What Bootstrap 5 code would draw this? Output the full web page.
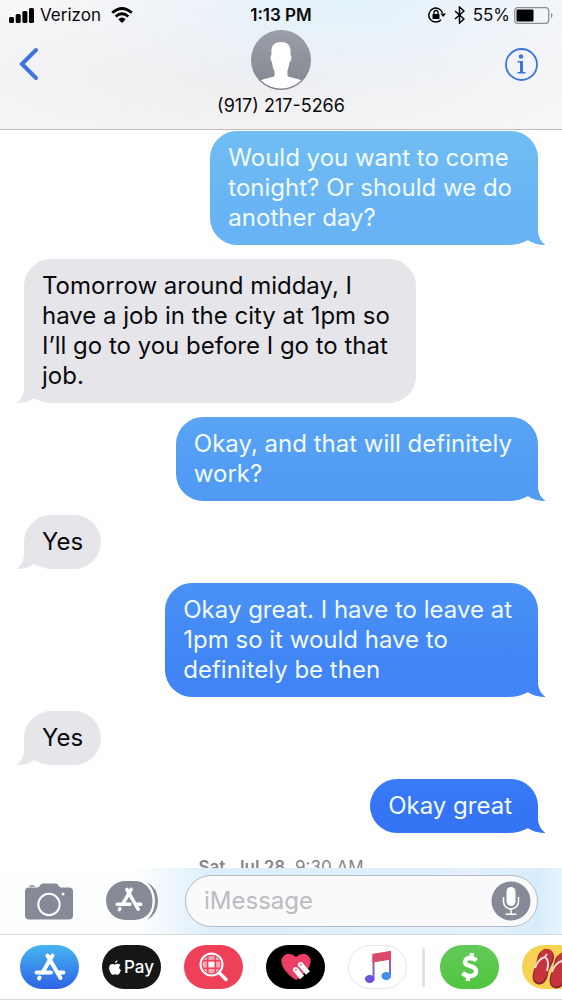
<!DOCTYPE html>
<html lang="en">
<head>
<meta charset="utf-8">
<meta name="viewport" content="width=device-width, initial-scale=1">
<title>Messages</title>
<link href="https://cdn.jsdelivr.net/npm/bootstrap@5.3.0/dist/css/bootstrap.min.css" rel="stylesheet">
<style>
  body { font-family: Inter, "Liberation Sans", sans-serif; color: #0a0a0c; background: #fff; }
  svg { display: block; flex: none; }
  .plain-btn { background: none; border: 0; padding: 0; }
  .three-part { display: grid; grid-template-columns: 1fr auto 1fr; align-items: center; }

  .top-bar {
    height: 130px;
    border-bottom: 1px solid #bebec1;
    background:
      radial-gradient(ellipse at 62% 0, #e2f1fb 0, rgba(226,241,251,0) 55%),
      radial-gradient(ellipse at 42% 60%, #eeeef0 0, #f6f6f8 80%);
  }
  .status { height: 30px; padding: 0 9px; font-size: 17px; line-height: 30px; }
  .carrier { margin: 0 10px 0 6px; }
  .contact-bar { height: 60px; padding: 0 18px; }
  .contact-bar .plain-btn { margin-top: 8px; }
  .details { padding-right: 6px; }
  .contact-name { font-size: 18px; line-height: 32px; font-weight: 400; }

  .thread { min-height: 0; gap: 14px; padding: 1px 24px 0; }
  .bubble { position: relative; flex: none; padding: 12px 26px 12px 18px; border-radius: 27px; font-size: 24px; line-height: 30px; }
  .bubble.short { padding-right: 18px; }
  .bubble .tail { position: absolute; bottom: 0; }
  .sent { color: #f1fbff; border-bottom-right-radius: 0; }
  .sent .tail { right: -8px; }
  .received { background: #e5e5ea; fill: #e5e5ea; border-bottom-left-radius: 0; }
  .received .tail { left: -8px; transform: scaleX(-1); }
  .notch { fill: #fff; }
  .tone-1 { background: linear-gradient(#70bdf3, #68b3f4 calc(100% - 28px)); fill: #68b3f4; }
  .tone-2 { background: linear-gradient(#5ba5f4, #519bf5 calc(100% - 28px)); fill: #519bf5; }
  .tone-3 { background: linear-gradient(#4a92f5, #4084f5 calc(100% - 28px)); fill: #4084f5; }
  .tone-4 { background: linear-gradient(#3a7cf6, #3575f5 calc(100% - 28px)); fill: #3575f5; }
  .day { color: #85858a; font-size: 17px; line-height: 20px; margin-top: 10px; flex: none; }

  .compose {
    height: 67px;
    padding: 0 24px;
    border-bottom: 1px solid #d9dadd;
    background: linear-gradient(90deg, #fdfefe 24%, #dceefb 38%, #e2f1fc 85%, #d8edfc 96%, #e6f4fd);
  }
  .message-box { height: 52px; min-width: 0; border: 1px solid #b9bac0; border-radius: 26px; background: #fafafa; padding: 0 6px 0 18px; margin-left: 27px; }
  .message-box input { border: 0; outline: 0; background: none; font-size: 24px; min-width: 0; padding: 0; }
  .message-box input::placeholder { color: #bcbcc2; opacity: 1; }
  .app-strip { height: 65px; gap: 23px; padding-left: 20px; border-bottom: 1px solid #d9dadd; }
  .app { width: 59px; height: 44px; border-radius: 22px; flex: none; overflow: hidden; display: flex; align-items: center; justify-content: center; }
  .app-store { background: linear-gradient(#45b5f0, #2d63e6); }
  .app-pay { background: #161616; color: #fff; font-size: 17px; line-height: 24px; font-weight: 500; gap: 3px; }
  .app-search { background: #ee4159; }
  .app-touch { background: #000; }
  .app-music { background: #fff; border: 1px solid #e6e6e8; }
  .app-cash { background: linear-gradient(#63ca5a, #4fc63f); }
  .app-emoji { background: #f7d354; }
  .divider { width: 3px; height: 39px; margin: 0 -8px; background: #e2e2e6; border-radius: 2px; flex: none; }
</style>
</head>
<body class="vh-100 d-flex flex-column overflow-hidden">

<svg width="0" height="0" class="position-absolute" aria-hidden="true">
  <symbol id="tail" viewBox="0 0 40 28">
    <path class="notch" d="M2 28Q14 28 22 23Q30 28 40 28V29H2Z"/>
    <path d="M32 0V14Q32.500 23 39.500 28Q29 28 22 23L20 0Z"/>
    <path class="notch" d="M32.300 14Q33 23 40 28V14Z"/>
  </symbol>
  <symbol id="store" viewBox="0 0 32 30">
    <g fill="none" stroke="currentColor" stroke-width="4" stroke-linecap="round">
      <path d="M13.500 3.500L26.500 26M18.500 3.500L8.500 20.500M5.500 25.500L5 26.500" />
      <path d="M2.500 20.500H17M24.500 20.500H29.500"/>
    </g>
  </symbol>
</svg>

<header class="top-bar flex-shrink-0">
  <div class="status three-part">
    <div class="d-flex align-items-center">
      <svg width="25" height="15" viewBox="0 0 25 15" aria-label="Signal"><rect y="9" width="5" height="6" rx="1.500"/><rect x="6.700" y="6" width="5" height="9" rx="1.500"/><rect x="13.400" y="3" width="5" height="12" rx="1.500"/><rect x="20" width="5" height="15" rx="1.500"/></svg>
      <span class="carrier">Verizon</span>
      <svg width="22" height="16" viewBox="0 0 22 16" aria-label="Wi-Fi"><g fill="none" stroke="#000" stroke-width="2.800"><path d="M1.200 5.800Q11 -2.800 20.800 5.800"/><path d="M4.700 9.500Q11 4 17.300 9.500"/></g><path d="M7.300 12.200Q11 9 14.700 12.200L11 16Z"/></svg>
    </div>
    <time class="fw-semibold">1:13 PM</time>
    <div class="d-flex align-items-center justify-content-end">
      <svg width="18" height="16" viewBox="0 0 18 16" aria-label="Rotation lock"><path d="M14.500 6A7 7 0 1 0 13 12.800" fill="none" stroke="#000" stroke-width="1.500"/><path d="M12.300 6.500H18L15.200 10Z"/><rect x="4.500" y="7" width="7" height="5" rx=".6"/><path d="M6 7V5.500a2 2 0 0 1 4 0V7" fill="none" stroke="#000" stroke-width="1.300"/></svg>
      <svg class="mx-2" width="11" height="18" viewBox="0 0 11 18" aria-label="Bluetooth"><path d="M1 5L10 13L5.500 17V1L10 5L1 13" fill="none" stroke="#000" stroke-width="1.500"/></svg>
      <span class="me-1">55%</span>
      <svg width="39" height="17" viewBox="0 0 39 17" aria-label="Battery"><rect x=".7" y=".7" width="34" height="15.600" rx="3" fill="none" stroke="#8d9196" stroke-width="1.300"/><rect x="2.500" y="2.500" width="17" height="12" rx="1"/><path d="M37 5.500Q40 8.500 37 11.500Z" fill="#8d9196"/></svg>
    </div>
  </div>
  <div class="contact-bar three-part">
    <div class="d-flex"><button class="plain-btn" type="button" aria-label="Back"><svg width="21" height="34" viewBox="0 0 21 34"><path d="M18 3L4 17L18 31" fill="none" stroke="#3d74dd" stroke-width="4" stroke-linecap="round"/></svg></button></div>
    <svg width="60" height="60" viewBox="0 0 60 60" aria-label="Contact photo"><defs><linearGradient id="av" x2="0" y2="1"><stop stop-color="#9b9fa9"/><stop offset="1" stop-color="#84868f"/></linearGradient><clipPath id="avc"><circle cx="30" cy="30" r="28.500"/></clipPath></defs><circle cx="30" cy="30" r="30" fill="url(#av)"/><path clip-path="url(#avc)" fill="#fff" d="M30 12C37 12 40.500 16 39.500 25C41 26 40.500 31 38.500 32C38 36 37 39 36.500 41V46C39 48 49 48 54 53L42 60H18L6 53C11 48 21 48 23.500 46V41C22 39 21.500 36 21 32C19.500 31 19 26 20.500 25C19.500 16 23 12 30 12Z"/></svg>
    <div class="details d-flex justify-content-end"><button class="plain-btn" type="button" aria-label="Details"><svg width="33" height="34" viewBox="0 0 33 34"><circle cx="16.500" cy="17.500" r="15.500" fill="none" stroke="#3d74dd" stroke-width="1.800"/><circle cx="16" cy="9.500" r="2.200" fill="#3d74dd"/><path d="M12.500 14H18V25H20.500V26.500H12.500V25H15V15.500H12.500Z" fill="#3d74dd"/></svg></button></div>
  </div>
  <h1 class="contact-name text-center m-0">(917) 217-5266</h1>
</header>

<main class="thread flex-grow-1 d-flex flex-column overflow-hidden">
  <div class="bubble sent tone-1 align-self-end">Would you want to come<br>tonight? Or should we do<br>another day?<svg class="tail" width="40" height="28"><use href="#tail"/></svg></div>
  <div class="bubble received align-self-start">Tomorrow around midday, I<br>have a job in the city at 1pm so<br>I’ll go to you before I go to that<br>job.<svg class="tail" width="40" height="28"><use href="#tail"/></svg></div>
  <div class="bubble sent tone-2 align-self-end">Okay, and that will definitely<br>work?<svg class="tail" width="40" height="28"><use href="#tail"/></svg></div>
  <div class="bubble received short align-self-start">Yes<svg class="tail" width="40" height="28"><use href="#tail"/></svg></div>
  <div class="bubble sent tone-3 align-self-end">Okay great. I have to leave at<br>1pm so it would have to<br>definitely be then<svg class="tail" width="40" height="28"><use href="#tail"/></svg></div>
  <div class="bubble received short align-self-start">Yes<svg class="tail" width="40" height="28"><use href="#tail"/></svg></div>
  <div class="bubble sent tone-4 align-self-end">Okay great<svg class="tail" width="40" height="28"><use href="#tail"/></svg></div>
  <div class="day text-center"><span class="fw-semibold">Sat, Jul 28,</span> 9:30 AM</div>
</main>

<footer class="flex-shrink-0">
  <form class="compose d-flex align-items-center">
    <button class="plain-btn" type="button" aria-label="Camera"><svg width="50" height="37" viewBox="0 0 50 37"><path fill="#858a96" d="M5 4.500Q1 4.500 1 8.500V32.500Q1 36.500 5 36.500H45Q49 36.500 49 32.500V8.500Q49 4.500 45 4.500H37Q35.500 4.500 34.500 2.500Q33.500 .5 31.500 .5H19Q17 .5 16 2.500Q15 4.500 13.500 4.500Z"/><path d="M5.500 3H10.500" stroke="#858a96" stroke-width="1.500"/><circle cx="25" cy="21.500" r="10.700" fill="none" stroke="#fff" stroke-width="2"/><circle cx="39" cy="11" r="1.500" fill="#fff"/></svg></button>
    <button class="plain-btn ms-4 ps-2" type="button" aria-label="Apps"><svg width="52" height="40" viewBox="0 0 52 40" color="#fff"><path fill="#858a96" d="M41 1Q52 7 52 20T41 39Q49 31 49 20T41 1Z"/><rect y="0" width="48" height="39" rx="19.500" fill="#858a96"/><path d="M37 1Q47.500 7 47.500 20T37 39" fill="none" stroke="#fff" stroke-width="1.800"/><use href="#store" x="9" y="5" width="28" height="27"/></svg></button>
    <div class="message-box d-flex align-items-center flex-grow-1">
      <input class="flex-fill w-100" type="text" placeholder="iMessage" aria-label="iMessage">
      <button class="plain-btn" type="button" aria-label="Dictate"><svg width="40" height="40" viewBox="0 0 40 40"><circle cx="20" cy="20" r="19.500" fill="#858a96"/><rect x="15.500" y="6" width="9" height="19" rx="4.500" fill="#fff"/><path d="M12.500 16V20.500A7.500 7.500 0 0 0 27.500 20.500V16M20 28V33M14.500 33.300H25.500" fill="none" stroke="#fff" stroke-width="1.500"/></svg></button>
    </div>
  </form>
  <nav class="app-strip d-flex align-items-center overflow-hidden" aria-label="Message apps">
    <button type="button" class="plain-btn app app-store text-white" aria-label="App Store"><svg width="32" height="30"><use href="#store"/></svg></button>
    <button type="button" class="plain-btn app app-pay"><svg width="12" height="15" viewBox="0 0 12 15"><path fill="#fff" d="M8.500 0Q8.600 3 6 3.500Q5.900 1 8.500 0ZM6 4.500Q9.500 2.800 11.500 5.300Q8.500 7.500 11.900 10.300Q10 15.500 8 14.700Q6 14 4.500 14.700Q2.300 15.300 .5 10.500Q-.8 5.500 2 4.300Q3.500 3.500 6 4.500Z"/></svg>Pay</button>
    <button type="button" class="plain-btn app app-search" aria-label="Image search"><svg width="30" height="30" viewBox="0 0 30 30"><circle cx="12.500" cy="12.500" r="9.500" fill="#f9a9b3"/><rect x="9.500" y="9.500" width="6" height="6" fill="#fff"/><g stroke="#ee4159" stroke-width="1.400" fill="none"><circle cx="12.500" cy="12.500" r="9.800"/><path d="M3 8.800H22M3 16.200H22M9 3Q8 12.500 9 22M16 3Q17 12.500 16 22"/></g><circle cx="12.500" cy="12.500" r="11" fill="none" stroke="#fff" stroke-width="2"/><path d="M20.500 21L27 27.500" stroke="#fff" stroke-width="3.400" stroke-linecap="round"/></svg></button>
    <button type="button" class="plain-btn app app-touch" aria-label="Digital Touch"><svg width="32" height="28" viewBox="0 0 32 28"><path fill="#ee3f66" d="M16 27Q9 23 4 16Q-1 8 3.500 3Q9-2 16 4Q23-2 28.500 3Q33 8 28 16Q23 23 16 27Z"/><path d="M15.500 16.500L22 24.500M20.500 11.500L28 20" stroke="#fff" stroke-width="5.200"/><g fill="#fff"><circle cx="15.500" cy="16.500" r="2.600"/><circle cx="20.500" cy="11.500" r="2.600"/></g><g fill="#ee9cac"><circle cx="15.800" cy="16.800" r="1.300"/><circle cx="20.800" cy="11.800" r="1.300"/></g></svg></button>
    <button type="button" class="plain-btn app app-music" aria-label="Music"><svg width="28" height="34" viewBox="0 0 28 34"><defs><linearGradient id="mu" x2="0" y2="1"><stop stop-color="#e8476a"/><stop offset=".45" stop-color="#a8569f"/><stop offset="1" stop-color="#4a6ee8"/></linearGradient></defs><path fill="url(#mu)" d="M8.500 4L27 1V27H25V9.500L10.500 12V29H8.500Z"/><path fill="#dc4a6b" d="M8.500 4L27 1V9.500L8.500 12.500Z"/><ellipse cx="5.700" cy="29" rx="4.800" ry="4" fill="#6d52e0"/><ellipse cx="22.200" cy="26" rx="4.800" ry="4" fill="#418fe8"/></svg></button>
    <span class="divider"></span>
    <button type="button" class="plain-btn app app-cash" aria-label="Cash"><svg width="22" height="32" viewBox="0 0 22 32"><path d="M17.500 9.500Q14.500 7 11 7C6.500 7 5 11 7 13.200C9 15.500 17 14.500 17 20C17 26 8.500 26.500 3.500 22" fill="none" stroke="#fff" stroke-width="4.400"/><path d="M12.200 7L13 2M9.500 24L8.700 30" stroke="#fff" stroke-width="4.400"/></svg></button>
    <button type="button" class="plain-btn app app-emoji" aria-label="Stickers"><svg width="59" height="44" viewBox="0 0 59 44"><g id="flop"><path d="M21 5C27 3 33 6 32 13C31 19 27 23 26 29C25 37 20 41 15 39C9 37 10 29 13 22C16 15 14 9 21 5Z" fill="#8f2730"/><path d="M22 4C28 3 32 6 31 12C30 18 26 22 25 28C24 35 19 39 15 37C10 35 12 28 14 22C17 15 16 8 22 4Z" fill="#c6343c"/><path d="M13 23Q16 14 23 12Q28 16 25 26M23 12L25 9" fill="none" stroke="#f6dfe0" stroke-width="2"/></g><use href="#flop" x="17" y="4"/></svg></button>
  </nav>
</footer>
<script src="https://cdn.jsdelivr.net/npm/bootstrap@5.3.0/dist/js/bootstrap.bundle.min.js"></script>
</body>
</html>
